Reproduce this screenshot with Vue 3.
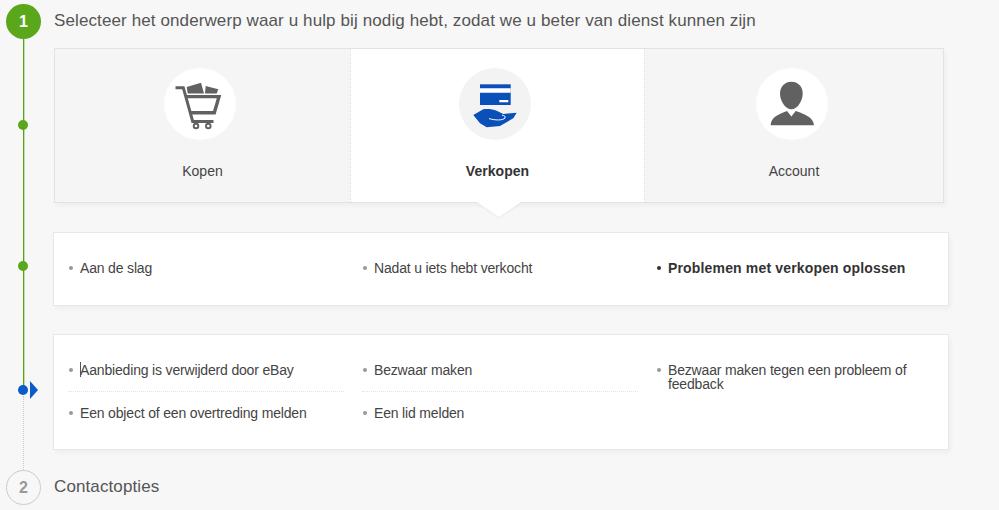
<script setup>
const topics = [
  { id: 'cart', label: 'Kopen' },
  { id: 'card', label: 'Verkopen', active: true },
  { id: 'person', label: 'Account' }
]
const subs = [
  { label: 'Aan de slag' },
  { label: 'Nadat u iets hebt verkocht' },
  { label: 'Problemen met verkopen oplossen', active: true }
]
const columns = [
  ['Aanbieding is verwijderd door eBay', 'Een object of een overtreding melden'],
  ['Bezwaar maken', 'Een lid melden'],
  ['Bezwaar maken tegen een probleem of feedback']
]
</script>

<template>
  <div class="page">
    <div class="rail" aria-hidden="true">
      <span class="line solid"></span>
      <span class="line dotted"></span>
      <span class="dot d1"></span>
      <span class="dot d2"></span>
      <span class="dot d3"></span>
      <span class="arrow"></span>
    </div>

    <header class="step">
      <span class="badge on">1</span>
      <h2>Selecteer het onderwerp waar u hulp bij nodig hebt, zodat we u beter van dienst kunnen zijn</h2>
    </header>

    <section class="topics">
      <div v-for="t in topics" :key="t.id" class="topic" :class="[t.id, { active: t.active }]">
        <span class="disc">
          <svg v-if="t.id === 'cart'" viewBox="0 0 72 72" width="72" height="72">
            <path d="M11.5 19.7H19.3L28.7 53.5H49.5" fill="none" stroke="#616161" stroke-width="3"/>
            <path d="M21 28.6H55L50.3 44.8H26" fill="none" stroke="#616161" stroke-width="3.4"/>
            <path d="M22.7 19 37 14.7 40 25.6H23.7ZM41.7 18 54.3 21.3 52.7 25.6H41Z" fill="#616161"/>
            <circle cx="32" cy="58" r="2.3" fill="none" stroke="#616161" stroke-width="1.9"/>
            <circle cx="44.3" cy="58" r="2.3" fill="none" stroke="#616161" stroke-width="1.9"/>
          </svg>
          <svg v-else-if="t.id === 'card'" viewBox="0 0 72 72" width="72" height="72">
            <path d="M21 16.3H51.7V37H21Z" fill="#0b50b8"/>
            <path d="M21 20.3H51.7V24.7H21ZM40.3 32H49.3V34.3H40.3Z" fill="#fff"/>
            <path d="M14.3 47 24.3 41.3C29 40.6 34 41.4 37.7 42.7L44.3 46 57.7 44.7 54.3 50.3 41 58 27.7 59.3 21 55.3Z" fill="#0b50b8"/>
            <path d="M30 50.6C36 52.4 44 52.6 46 50 46.6 48.4 45.4 47.4 43 47.2" fill="none" stroke="#fff" stroke-width="1"/>
          </svg>
          <svg v-else viewBox="0 0 72 72" width="72" height="72">
            <path d="M35.4 13.7C42 13.7 46.7 18.5 46.7 25.5 46.7 32.5 41.5 41.3 35.5 41.3 29 41.3 24 32.5 24 25.5 24 18.5 28.8 13.7 35.4 13.7Z" fill="#616161"/>
            <path d="M14.7 57.2C15 50.5 20 47 31 43L35.4 48.4 39.6 43C50.5 46.5 57.4 50 58 57.2Z" fill="#616161"/>
          </svg>
        </span>
        <span class="topic-label">{{ t.label }}</span>
      </div>
      <span class="pointer"></span>
    </section>

    <section class="panel subs">
      <div v-for="s in subs" :key="s.label" class="item" :class="{ strong: s.active }">{{ s.label }}</div>
    </section>

    <section class="panel details">
      <div v-for="(col, i) in columns" :key="i" class="col">
        <div v-for="text in col" :key="text" class="item row">{{ text }}</div>
      </div>
      <span class="caret"></span>
    </section>

    <footer class="step second">
      <span class="badge off">2</span>
      <h2>Contactopties</h2>
    </footer>
  </div>
</template>

<style>
html, body { margin: 0; background: #f7f7f7; overflow: hidden; }
</style>

<style scoped>
.page {
  position: relative;
  width: 999px;
  height: 510px;
  overflow: hidden;
  box-sizing: border-box;
  padding: 4px 0 0 54px;
  background: #f7f7f7;
  color: #333;
  font-family: "Liberation Sans", Arial, sans-serif;
  font-size: 14px;
}
.rail { position: absolute; inset: 0; }
.line { position: absolute; left: 23px; }
.solid { top: 36px; height: 350px; width: 1px; background: #56a313; box-shadow: 1px 0 0 rgba(91, 167, 27, .35); }
.dotted { top: 396px; height: 74px; width: 0; border-left: 1px dotted #ccc; }
.dot { position: absolute; left: 18px; width: 10px; height: 10px; border-radius: 50%; background: #5ba71b; }
.d1 { top: 120px; }
.d2 { top: 261px; }
.d3 { top: 385px; background: #0b5bc8; }
.arrow {
  position: absolute; left: 30px; top: 381px;
  border-left: 8px solid #0b5bc8;
  border-top: 9px solid transparent;
  border-bottom: 9px solid transparent;
}
.step { position: relative; display: flex; align-items: center; height: 34px; }
.step h2 { margin: 0; font-size: 17px; letter-spacing: .11px; font-weight: 400; color: #555; white-space: nowrap; }
.badge {
  position: absolute; left: -48px; top: 0;
  box-sizing: border-box; width: 35px; height: 35px; border-radius: 50%;
  display: flex; align-items: center; justify-content: center;
  font-size: 16px; font-weight: 700;
}
.badge.on { background: #5ba71b; color: #fff; }
.badge.off { background: #f7f7f7; border: 1px solid #ccc; color: #999; }
.topics {
  position: relative;
  display: grid;
  grid-template-columns: 295px 295px 298px;
  width: 890px; height: 155px;
  margin-top: 10px;
  box-sizing: border-box;
  border: 1px solid #e2e2e2;
  background: #f5f5f5;
  box-shadow: 2px 3px 5px rgba(0, 0, 0, .04);
}
.topic {
  display: flex; flex-direction: column; align-items: center;
  padding-top: 19px;
  box-sizing: border-box;
  height: 153px;
}
.topic.active {
  background: #fff;
  border-left: 1px dotted #ddd;
  border-right: 1px dotted #ddd;
}
.disc {
  display: block; width: 72px; height: 72px; border-radius: 50%; background: #fff;
  margin-left: -5px;
}
.active .disc { background: #f3f3f3; }
.disc svg { display: block; }
.topic-label { margin-top: 23px; line-height: 16px; color: #444; }
.active .topic-label { font-weight: 700; color: #333; letter-spacing: .05px; }
.pointer {
  position: absolute; left: 422px; top: 153px;
  width: 0; height: 0;
  border-left: 22px solid transparent;
  border-right: 22px solid transparent;
  border-top: 15px solid #fff;
  filter: drop-shadow(0 1px 1px rgba(0, 0, 0, .06));
}
.panel {
  position: relative;
  display: grid;
  grid-template-columns: repeat(3, 276px);
  column-gap: 18px;
  width: 894px;
  box-sizing: border-box;
  padding: 0 14px;
  background: #fff;
  box-shadow: 0 0 0 1px #e8e8e8, 2px 3px 5px rgba(0, 0, 0, .05);
}
.subs { height: 72px; margin-top: 30px; padding-bottom: 2px; align-items: center; }
.details { height: 114px; margin-top: 30px; padding-top: 21px; align-items: start; }
.item {
  position: relative;
  padding-left: 12px;
  line-height: 14px;
  color: #444;
  letter-spacing: -.17px;
}
.item::before {
  content: "";
  position: absolute; left: 1px; top: 5px;
  width: 4px; height: 4px; border-radius: 50%;
  background: #999;
}
.item.strong { font-weight: 700; color: #333; letter-spacing: .16px; }
.item.strong::before { background: #333; }
.row { padding-top: 7px; padding-bottom: 14px; border-bottom: 1px dotted #e4e4e4; }
.row::before { top: 12px; }
.row:last-child { border-bottom: 0; }
.col:last-child .row:last-child { border-bottom: 1px dotted #e4e4e4; }
.row + .row { padding-top: 14px; }
.row + .row::before { top: 19px; }
.caret { position: absolute; left: 26px; top: 27px; width: 1px; height: 15px; background: #555; }
.second { position: absolute; left: 54px; top: 470px; }
</style>
